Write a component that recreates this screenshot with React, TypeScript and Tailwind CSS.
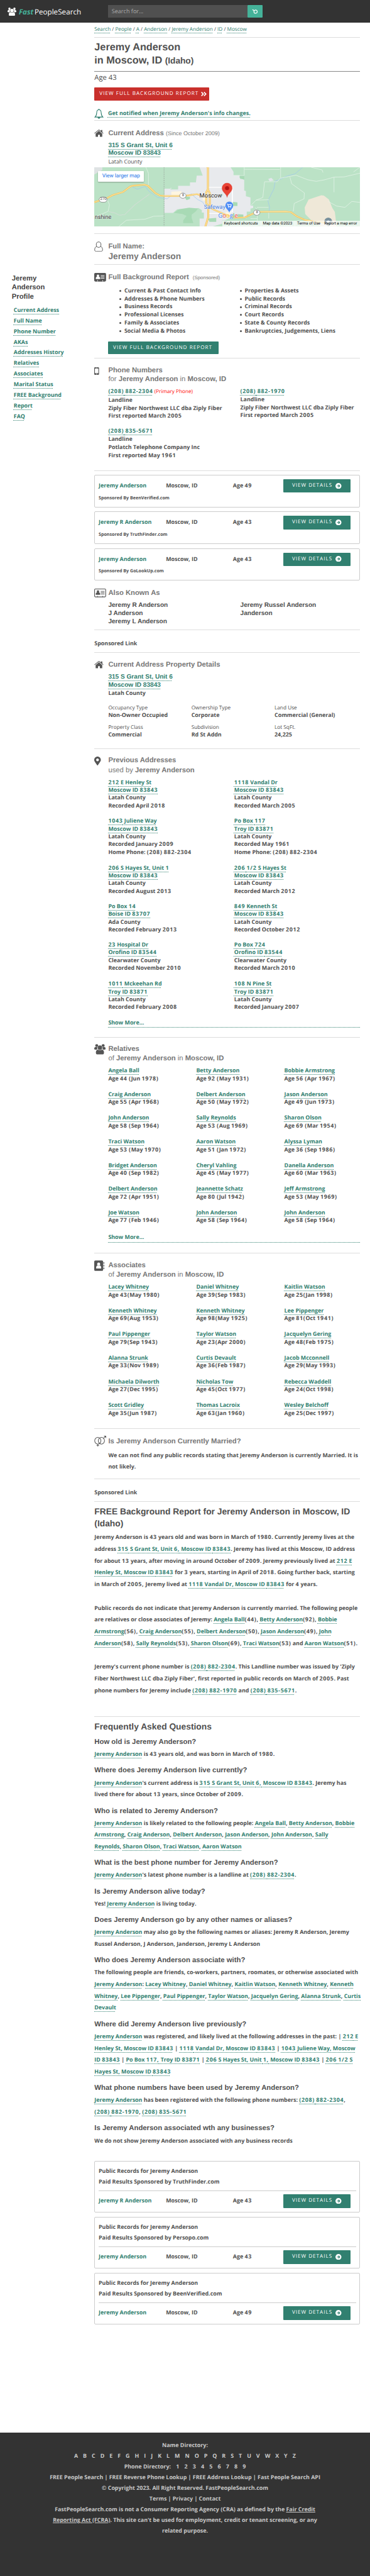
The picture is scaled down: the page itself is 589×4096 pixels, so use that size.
import type { ReactNode } from "react";
import { FaAngleDoubleRight, FaSearch, FaMapMarkerAlt } from "react-icons/fa";

const sans = "font-['Open_Sans','Noto_Sans',sans-serif]";
const arial = "font-['Liberation_Sans',Arial,sans-serif]";
const dotted =
  "text-[#318070] underline decoration-dotted decoration-1 underline-offset-[2.5px] [text-decoration-skip-ink:none]";

/* Figures and parentheses are set slightly wider than letters. */
function Txt({ children }: { children: ReactNode }) {
  if (typeof children !== "string") return <>{children}</>;
  return (
    <>
      {children.split(/((?:\d[\d(),/-]*|\(\d[\d)-]*|[()]))/).map((p, i) =>
        /^[\d()]/.test(p) ? (
          <span key={i} className="tracking-[0.700px]">{p}</span>
        ) : (
          p
        )
      )}
    </>
  );
}

function A({ children, plain }: { children: ReactNode; plain?: boolean }) {
  return <a className={dotted}>{plain ? children : <Txt>{children}</Txt>}</a>;
}

function Lines({ lines, className = "", plain }: { lines: ReactNode[]; className?: string; plain?: boolean }) {
  return (
    <div className={`whitespace-nowrap ${className}`}>
      {lines.map((l, i) => (
        <div key={i}>{plain ? l : <Txt>{l}</Txt>}</div>
      ))}
    </div>
  );
}

function Heading({ icon, children, className = "leading-[16px]" }: { icon?: ReactNode; children: ReactNode; className?: string }) {
  return (
    <div className="flex">
      <div className="flex h-4 w-[22.100px] shrink-0 items-center">{icon}</div>
      <h2 className={`${arial} whitespace-nowrap text-[11.270px] font-bold text-[#777] ${className}`}>{children}</h2>
    </div>
  );
}

function HouseIcon() {
  return (
    <svg viewBox="0 0 24 18" preserveAspectRatio="none" className="h-[11.500px] w-[15px]" fill="#555">
      <path d="M17 1h3.600v5.200l3 3-1 1.100L12 1.600 1.200 10.300l-1-1.200L11 .4h2l4 3.300z" />
      <path d="M12 3.200l8.400 6.900V18h-6v-5h-4.800v5h-6v-7.900z" />
    </svg>
  );
}

function BellIcon() {
  return (
    <svg viewBox="0 0 24 26" className="h-[16px] w-[15px]" fill="none" stroke="#318070" strokeWidth="1.8">
      <path d="M12 2.5c-4 0-5.6 3.400-5.800 7.500C6 15 5 18.500 1.800 21.400h20.400C19 18.500 18 15 17.800 10 17.600 5.900 16 2.500 12 2.500z" />
      <path d="M12 0v2.500" />
      <path d="M9 22h6c0 4-6 4-6 0z" fill="#318070" strokeWidth="1" />
    </svg>
  );
}

function PersonIcon() {
  return (
    <svg viewBox="0 0 22 26" className="h-[16.300px] w-[14px]" fill="none" stroke="#555" strokeWidth="1.500">
      <ellipse cx="11" cy="8" rx="6" ry="6.900" />
      <path d="M6.300 12.400C2.500 13.500 1 17 1 21c0 2.600 1.400 4.100 4 4.100h12c2.600 0 4-1.500 4-4.100 0-4-1.500-7.500-5.300-8.600" />
    </svg>
  );
}

function CardIcon({ solid }: { solid?: boolean }) {
  const fg = solid ? "#fff" : "#555";
  return (
    <svg viewBox="0 0 30 23" preserveAspectRatio="none" className="h-[14px] w-[18.800px]">
      <rect x="0.900" y="0.900" width="28.200" height="20.600" rx="2" fill={solid ? "#555" : "#fff"} stroke="#555" strokeWidth="1.800" />
      <ellipse cx="9.500" cy="7.200" rx="3" ry="3.200" fill={fg} />
      <path d="M4 16v-2.500c0-2 1.500-3.300 3-3.500h5c1.500.2 3 1.500 3 3.500V16z" fill={fg} />
      <path d="M16.500 7H26M16.500 10.500H26M16.500 14H26" stroke={fg} strokeWidth="1.500" />
      <path d="M8.500 19v3M21.500 19v3" stroke={fg} strokeWidth="1.500" />
    </svg>
  );
}

function PhoneIcon() {
  return (
    <svg viewBox="0 0 12 19" className="h-[12px] w-[7.600px]">
      <rect width="12" height="19" rx="2" fill="#555" />
      <rect x="1.700" y="3.300" width="8.600" height="11.500" fill="#fff" />
      <rect x="4.200" y="1.300" width="3.600" height="0.800" fill="#fff" />
      <circle cx="6" cy="16.900" r="1.100" fill="#fff" />
    </svg>
  );
}

function PeopleIcon({ className }: { className: string }) {
  return (
    <svg viewBox="0 0 29 26" preserveAspectRatio="none" className={className} fill="currentColor">
      <circle cx="6.300" cy="3.900" r="3.700" />
      <circle cx="22.700" cy="3.900" r="3.700" />
      <path d="M3.400 7.500C1 8 0 9.500 0 11.500c0 2 .8 2.800 3 2.800h4C8 13 7.500 9.500 8.300 8.200zM25.600 7.500C28 8 29 9.500 29 11.500c0 2-.8 2.800-3 2.800h-4c-1-1.300-.5-4.800-1.300-6.100z" />
      <circle cx="14.500" cy="9.300" r="5.600" />
      <path d="M9.300 14.200C5.500 15 4.200 17.500 4.200 21.500c0 3 1.600 4.500 4 4.500h12.600c2.400 0 4-1.500 4-4.500 0-4-1.300-6.500-5.100-7.300-2.800 2.300-7.600 2.300-10.400 0z" />
    </svg>
  );
}

function BookIcon() {
  return (
    <svg viewBox="0 0 26 27" className="h-[17px] w-[16px]">
      <rect width="23" height="27" rx="3" fill="#555" />
      <path d="M24 4.500h2v4h-2zM24 11.500h2v4h-2zM24 18.500h2v4h-2z" fill="#555" />
      <ellipse cx="11.500" cy="9.500" rx="3.900" ry="4.300" fill="#fff" />
      <path d="M5 21v-2.500c0-3 1.800-4.900 3.600-5.300 1.700 1.400 4.100 1.400 5.800 0 1.800.4 3.600 2.300 3.600 5.300V21z" fill="#fff" />
    </svg>
  );
}

function RingsIcon() {
  return (
    <svg viewBox="0 0 30 27" className="h-[17px] w-[19px]" fill="none" stroke="#555" strokeWidth="1.600">
      <ellipse cx="9" cy="12.500" rx="7.900" ry="8.500" />
      <ellipse cx="18" cy="12.500" rx="7.900" ry="8.500" />
      <path d="M9 21v6M5.800 24.300h6.400M23.500 6L29 1M24.500.8H29.200V5.500" />
    </svg>
  );
}

function ArrowCircle() {
  return (
    <svg viewBox="0 0 16 16" className="size-[9.500px]">
      <circle cx="8" cy="8" r="8" fill="#fff" />
      <path d="M4 8h7M8 4.600L11.400 8 8 11.400" stroke="#318070" strokeWidth="2" fill="none" />
    </svg>
  );
}

function DetailRow({ name, age, className }: { name: string; age: number; className: string }) {
  return (
    <div className={`flex ${className}`}>
      <div className="w-[107.200px] pt-[4px] text-[#318070]">{name}</div>
      <div className="w-[106.700px] pt-[4px]">Moscow, ID</div>
      <div className="w-[80px] pt-[4px]"><Txt>{`Age ${age}`}</Txt></div>
      <div className="flex h-[21.400px] w-[106.800px] items-center justify-center gap-[5px] rounded-[1px] bg-[#318070] pb-px text-[8.140px] font-normal tracking-[1px] text-white">
        <span>VIEW DETAILS</span>
        <ArrowCircle />
      </div>
    </div>
  );
}

const route8 = "M412 233H523L560 228 606 219 622 226 650 240M413 233L388 230 362 212 316 155 296 147 230 155 214 160 170 203 110 226 75 250 0 281";
const route8b = "M665 12L671 15V182L661 205V287L676 318 707 338 775 376 830 400 890 396 960 354 1130 352 1160 356 1195 388 1240 414 1300 428 1390 440";
const route95 = "M671 185L682 212V300L673 330V395L656 465";

function MapPanel() {
  return (
    <div className="relative mt-[2.400px] h-[94px] w-[423px] overflow-hidden bg-[#bbe2c6] font-['Roboto',sans-serif] font-normal">
      <svg viewBox="0 15 1568 450" preserveAspectRatio="none" className="h-full w-full">
        <path d="M0 15H48V35L0 70z" fill="#dfe3e4" />
        <path
          d="M622 15L632 50 640 78H605L600 130H565V156H495V184H450V172H455V178H414V362H465L490 335H580L615 325 635 340V360H647V405H622V465H700L755 445V420H770L800 400H900V352H922V330L938 325V307H922V245L895 235V196L885 192V108L860 104V76H822V50L805 15z"
          fill="#e8eaed"
        />
        <path d="M470 362L500 335 560 322 612 328 600 350 575 375V400L585 440H525V420L545 385 520 370z" fill="#a8dab5" />
        <path d="M815 278L845 282V310H815zM845 372L880 375V395L845 400zM858 76H885V110L858 95zM530 236L565 240V255L545 265zM745 218H757V232H745zM672 405L720 400V430H680z" fill="#a8dab5" />
        <path d="M455 200L515 197V226H455zM640 245H665V268H640zM775 355H805V380H775z" fill="#fef6e0" />
        <path d="M1340 228L1265 260 1242 320 1245 370 1290 430 1340 465H1430L1420 355 1405 325 1385 260 1355 230z" fill="#efe8d8" />
        <path d="M1027 103L1045 95 1060 115 1035 122z" fill="#e1e6ea" />
        <g fill="none" stroke="#9ec7f0" strokeWidth="3">
          <path d="M1230 15L1185 65 1140 80 1100 105 1068 120 1060 180 1025 270 1035 320 1030 365" />
          <path d="M225 165L255 182 300 160 325 200 375 245 430 255 450 235M570 215L610 260 640 280 660 320" />
        </g>
        <g fill="none" stroke="#e9f5ec" strokeWidth="3">
          <path d="M305 15L320 60V152M75 255L90 300 82 350 30 380 0 390M145 465L190 418 300 410 350 388 410 385" />
          <path d="M885 15V78H822M885 30L1095 32M1100 15V95L1080 125H1005L995 245 955 265 925 305M1100 98L1190 75 1260 110 1310 122 1360 110 1415 90 1475 88 1568 60M1155 90L1165 140 1240 210 1238 255 1180 290 1175 350M1280 15L1345 35 1350 55M1568 15L1530 50M1415 90V205M1568 282L1520 275 1480 320 1430 310 1380 275" />
          <path d="M955 265L1030 262M960 320H1028M970 350L950 320M1030 360V405M962 360V422M922 405H960" />
        </g>
        <path d="M85 352L120 362 150 380 180 375 240 300 325 220" fill="none" stroke="#d3ddd6" strokeWidth="4" />
        <path d="M672 168H815V355H790M672 366H740" fill="none" stroke="#fff" strokeWidth="6" />
        <path d="M412 15V465" stroke="#888" strokeWidth="2.500" strokeDasharray="9 7" />
        <g fill="none" stroke="#f5bd4d" strokeWidth="11">
          <path d={route8} />
          <path d={route8b} />
          <path d={route95} />
        </g>
        <g fill="none" stroke="#fde7a5" strokeWidth="5">
          <path d={route8} />
          <path d={route8b} />
          <path d={route95} />
        </g>
        <g fill="#fff" stroke="#777" strokeWidth="3">
          <rect x="29" y="241" width="47" height="40" rx="18" ry="20" />
          <ellipse cx="523" cy="231" rx="19" ry="20" />
          <ellipse cx="959" cy="360" rx="19" ry="20" />
        </g>
        <path d="M784 245C781 215 754 205 754 173a30 38 0 0 1 60 0C814 205 787 215 784 245z" fill="#ea4335" stroke="#c5322a" strokeWidth="1.500" />
        <ellipse cx="784" cy="174" rx="12" ry="15" fill="#b31412" />
        <path d="M797 363C794 338 774 332 774 306a23 30 0 0 1 46 0C820 332 800 338 797 363z" fill="#4f8df5" />
        <path d="M783 296H788L792 314H806L809 300H790" fill="none" stroke="#fff" strokeWidth="4" />
        <circle cx="793" cy="321" r="3" fill="#fff" />
        <circle cx="805" cy="321" r="3" fill="#fff" />
        <path d="M1381 465L1362 445a23 30 0 1 1 38 0z" fill="#78909c" />
        <ellipse cx="1381" cy="430" rx="8" ry="10" fill="#fff" />
      </svg>
      <span className="absolute left-[9.300px] top-[47.500px] text-[6px] leading-[8px] text-[#555]">270</span>
      <span className="absolute left-[139.400px] top-[41.200px] text-[6px] leading-[8px] text-[#555]">8</span>
      <span className="absolute left-[257.100px] top-[68px] text-[6px] leading-[8px] text-[#555]">8</span>
      <span className="absolute left-[167.300px] top-[41px] text-[9.400px] leading-[10px] text-[#222] [text-shadow:0_0_1px_#fff,0_0_2px_#fff]">Moscow</span>
      <span className="absolute left-[174.500px] top-[59px] text-[9px] leading-[10px] text-[#3a78e0] [text-shadow:0_0_1px_#fff,0_0_2px_#fff]">Safeway</span>
      <span className="absolute left-[0.500px] top-[75px] text-[9px] leading-[10px] text-[#333] [text-shadow:0_0_1px_#fff,0_0_2px_#fff]">nshine</span>
      <span className={`absolute left-[197px] top-[71px] text-[9.500px] font-medium leading-[12px] [text-shadow:0_0_1px_#fff,0_0_1px_#fff] ${sans}`}>
        <span className="text-[#4285f4]">G</span>
        <span className="text-[#ea4335]">o</span>
        <span className="text-[#fbbc05]">o</span>
        <span className="text-[#4285f4]">g</span>
        <span className="text-[#34a853]">l</span>
        <span className="text-[#ea4335]">e</span>
      </span>
      <div className="absolute left-[6.200px] top-[6.200px] h-[16.400px] w-[72.500px] rounded-[1px] bg-white text-center text-[8.400px] leading-[16.400px] text-[#1a73e8] shadow-[0_1px_2px_rgba(0,0,0,0.3)]">
        View larger map
      </div>
      <div className="absolute bottom-0 right-0 flex h-[8.800px] bg-white/70 text-[6.240px] leading-[9.500px] text-black">
        <span className="w-[61.500px] whitespace-nowrap pl-[3px]">Keyboard shortcuts</span>
        <span className="w-[54px] whitespace-nowrap border-l border-white/60 pl-[2.500px]">Map data ©2023</span>
        <span className="w-[45.300px] whitespace-nowrap border-l border-white/60 pl-[3px]">Terms of Use</span>
        <span className="w-[59px] whitespace-nowrap pl-[2px]">Report a map error</span>
      </div>
    </div>
  );
}

const profileLinks = [
  "Current Address", "Full Name", "Phone Number", "AKAs", "Addresses History", "Relatives",
  "Associates", "Marital Status", "FREE Background", "Report", "FAQ",
];

type Address = { street: string; city: string; rest: string[] };
const addresses: { h: string; pair: [Address, Address] }[] = [
  { h: "h-[61.500px]", pair: [
    { street: "212 E Henley St", city: "Moscow ID 83843", rest: ["Latah County", "Recorded April 2018"] },
    { street: "1118 Vandal Dr", city: "Moscow ID 83843", rest: ["Latah County", "Recorded March 2005"] } ] },
  { h: "h-[74.500px]", pair: [
    { street: "1043 Juliene Way", city: "Moscow ID 83843", rest: ["Latah County", "Recorded January 2009", "Home Phone: (208) 882-2304"] },
    { street: "Po Box 117", city: "Troy ID 83871", rest: ["Latah County", "Recorded May 1961", "Home Phone: (208) 882-2304"] } ] },
  { h: "h-[61.200px]", pair: [
    { street: "206 S Hayes St, Unit 1", city: "Moscow ID 83843", rest: ["Latah County", "Recorded August 2013"] },
    { street: "206 1/2 S Hayes St", city: "Moscow ID 83843", rest: ["Latah County", "Recorded March 2012"] } ] },
  { h: "h-[61.200px]", pair: [
    { street: "Po Box 14", city: "Boise ID 83707", rest: ["Ada County", "Recorded February 2013"] },
    { street: "849 Kenneth St", city: "Moscow ID 83843", rest: ["Latah County", "Recorded October 2012"] } ] },
  { h: "h-[62.200px]", pair: [
    { street: "23 Hospital Dr", city: "Orofino ID 83544", rest: ["Clearwater County", "Recorded November 2010"] },
    { street: "Po Box 724", city: "Orofino ID 83544", rest: ["Clearwater County", "Recorded March 2010"] } ] },
  { h: "h-[62px]", pair: [
    { street: "1011 Mckeehan Rd", city: "Troy ID 83871", rest: ["Latah County", "Recorded February 2008"] },
    { street: "108 N Pine St", city: "Troy ID 83871", rest: ["Latah County", "Recorded January 2007"] } ] },
];

const relatives: [string, string][] = [
  ["Angela Ball", "Age 44 (Jun 1978)"], ["Betty Anderson", "Age 92 (May 1931)"], ["Bobbie Armstrong", "Age 56 (Apr 1967)"],
  ["Craig Anderson", "Age 55 (Apr 1968)"], ["Delbert Anderson", "Age 50 (May 1972)"], ["Jason Anderson", "Age 49 (Jun 1973)"],
  ["John Anderson", "Age 58 (Sep 1964)"], ["Sally Reynolds", "Age 53 (Aug 1969)"], ["Sharon Olson", "Age 69 (Mar 1954)"],
  ["Traci Watson", "Age 53 (May 1970)"], ["Aaron Watson", "Age 51 (Jan 1972)"], ["Alyssa Lyman", "Age 36 (Sep 1986)"],
  ["Bridget Anderson", "Age 40 (Sep 1982)"], ["Cheryl Vahling", "Age 45 (May 1977)"], ["Danella Anderson", "Age 60 (Mar 1963)"],
  ["Delbert Anderson", "Age 72 (Apr 1951)"], ["Jeannette Schatz", "Age 80 (Jul 1942)"], ["Jeff Armstrong", "Age 53 (May 1969)"],
  ["Joe Watson", "Age 77 (Feb 1946)"], ["John Anderson", "Age 58 (Sep 1964)"], ["John Anderson", "Age 58 (Sep 1964)"],
];

const associates: [string, string][] = [
  ["Lacey Whitney", "Age 43(May 1980)"], ["Daniel Whitney", "Age 39(Sep 1983)"], ["Kaitlin Watson", "Age 25(Jan 1998)"],
  ["Kenneth Whitney", "Age 69(Aug 1953)"], ["Kenneth Whitney", "Age 98(May 1925)"], ["Lee Pippenger", "Age 81(Oct 1941)"],
  ["Paul Pippenger", "Age 79(Sep 1943)"], ["Taylor Watson", "Age 23(Apr 2000)"], ["Jacquelyn Gering", "Age 48(Feb 1975)"],
  ["Alanna Strunk", "Age 33(Nov 1989)"], ["Curtis Devault", "Age 36(Feb 1987)"], ["Jacob Mcconnell", "Age 29(May 1993)"],
  ["Michaela Dilworth", "Age 27(Dec 1995)"], ["Nicholas Tow", "Age 45(Oct 1977)"], ["Rebecca Waddell", "Age 24(Oct 1998)"],
  ["Scott Gridley", "Age 35(Jun 1987)"], ["Thomas Lacroix", "Age 63(Jan 1960)"], ["Wesley Belchoff", "Age 25(Dec 1997)"],
];

function People({ list, className }: { list: [string, string][]; className: string }) {
  return (
    <div className={`ml-[22.100px] grid grid-cols-[140px_140.200px_120px] ${className}`}>
      {list.map(([n, a], i) => (
        <Lines key={i} className="h-[37.640px] leading-[12.500px]" lines={[<A>{n}</A>, a]} />
      ))}
    </div>
  );
}

const checks = [
  ["Current & Past Contact Info", "Addresses & Phone Numbers", "Business Records", "Professional Licenses", "Family & Associates", "Social Media & Photos"],
  ["Properties & Assets", "Public Records", "Criminal Records", "Court Records", "State & County Records", "Bankruptcies, Judgements, Liens"],
];

const property = [
  ["Occupancy Type", "Non-Owner Occupied"], ["Ownership Type", "Corporate"], ["Land Use", "Commercial (General)"],
  ["Property Class", "Commercial"], ["Subdivision", "Rd St Addn"], ["Lot SqFt.", "24,225"],
];

/* Text between square brackets is rendered as a dotted link. */
function Rich({ text }: { text: string }) {
  return (
    <div>
      {text === "" ? "\u00a0" : text.split(/(\[[^\]]+\])/).map((part, i) =>
        part.startsWith("[") ? <A key={i}>{part.slice(1, -1)}</A> : <Txt key={i}>{part}</Txt>
      )}
    </div>
  );
}

const report = [
  "Jeremy Anderson is 43 years old and was born in March of 1980. Currently Jeremy lives at the",
  "address [315 S Grant St, Unit 6, Moscow ID 83843]. Jeremy has lived at this Moscow, ID address",
  "for about 13 years, after moving in around October of 2009. Jeremy previously lived at [212 E]",
  "[Henley St, Moscow ID 83843] for 3 years, starting in April of 2018. Going further back, starting",
  "in March of 2005, Jeremy lived at [1118 Vandal Dr, Moscow ID 83843] for 4 years.",
  "",
  "Public records do not indicate that Jeremy Anderson is currently married. The following people",
  "are relatives or close associates of Jeremy: [Angela Ball](44), [Betty Anderson](92), [Bobbie]",
  "[Armstrong](56), [Craig Anderson](55), [Delbert Anderson](50), [Jason Anderson](49), [John]",
  "[Anderson](58), [Sally Reynolds](53), [Sharon Olson](69), [Traci Watson](53) and [Aaron Watson](51).",
  "",
  "Jeremy's current phone number is [(208) 882-2304]. This Landline number was issued by 'Ziply",
  "Fiber Northwest LLC dba Ziply Fiber', first reported in public records on March of 2005. Past",
  "phone numbers for Jeremy include [(208) 882-1970] and [(208) 835-5671].",
];

const faq: [string, string[]][] = [
  ["How old is Jeremy Anderson?", ["[Jeremy Anderson] is 43 years old, and was born in March of 1980."]],
  ["Where does Jeremy Anderson live currently?", [
    "[Jeremy Anderson]'s current address is [315 S Grant St, Unit 6, Moscow ID 83843]. Jeremy has",
    "lived there for about 13 years, since October of 2009."]],
  ["Who is related to Jeremy Anderson?", [
    "[Jeremy Anderson] is likely related to the following people: [Angela Ball], [Betty Anderson], [Bobbie]",
    "[Armstrong], [Craig Anderson], [Delbert Anderson], [Jason Anderson], [John Anderson], [Sally]",
    "[Reynolds], [Sharon Olson], [Traci Watson], [Aaron Watson]"]],
  ["What is the best phone number for Jeremy Anderson?", ["[Jeremy Anderson]'s latest phone number is a landline at [(208) 882-2304]."]],
  ["Is Jeremy Anderson alive today?", ["Yes! [Jeremy Anderson] is living today."]],
  ["Does Jeremy Anderson go by any other names or aliases?", [
    "[Jeremy Anderson] may also go by the following names or aliases: Jeremy R Anderson, Jeremy",
    "Russel Anderson, J Anderson, Janderson, Jeremy L Anderson"]],
  ["Who does Jeremy Anderson associate with?", [
    "The following people are friends, co-workers, partners, roomates, or otherwise associated with",
    "[Jeremy Anderson]: [Lacey Whitney], [Daniel Whitney], [Kaitlin Watson], [Kenneth Whitney], [Kenneth]",
    "[Whitney], [Lee Pippenger], [Paul Pippenger], [Taylor Watson], [Jacquelyn Gering], [Alanna Strunk], [Curtis]",
    "[Devault]"]],
  ["Where did Jeremy Anderson live previously?", [
    "[Jeremy Anderson] was registered, and likely lived at the following addresses in the past: | [212 E]",
    "[Henley St, Moscow ID 83843] | [1118 Vandal Dr, Moscow ID 83843] | [1043 Juliene Way, Moscow]",
    "[ID 83843] | [Po Box 117, Troy ID 83871] | [206 S Hayes St, Unit 1, Moscow ID 83843] | [206 1/2 S]",
    "[Hayes St, Moscow ID 83843]"]],
  ["What phone numbers have been used by Jeremy Anderson?", [
    "[Jeremy Anderson] has been registered with the following phone numbers: [(208) 882-2304],",
    "[(208) 882-1970], [(208) 835-5671]"]],
  ["Is Jeremy Anderson associated wth any businesses?", ["We do not show Jeremy Anderson associated with any business records"]],
];

const section = "border-t border-[#ddd]";

export default function App() {
  return (
    <div className={`flex h-[4096px] w-[589px] flex-col bg-white text-[8.900px] font-bold text-[#505050] [text-rendering:geometricPrecision] ${sans}`}>
      <header className="flex h-9 items-start bg-[#333] font-normal text-white">
        <div className="flex w-[171.700px] items-center pl-[12.400px] pt-[8.500px]">
          <PeopleIcon className="h-[13.500px] w-[14px]" />
          <span className="ml-[3.500px] whitespace-nowrap text-[11.700px] leading-[20px]">
            <span className="font-bold italic text-[#45b299]">Fast</span>
            <span className="ml-[1.500px]">PeopleSearch</span>
          </span>
        </div>
        <div className="mt-2 flex h-[19.500px] w-[246px]">
          <div className="w-[222px] bg-[#505050] pl-[6px] text-[9.100px] leading-[20px] text-[#aaa]">Search for...</div>
          <div className="flex w-[24px] items-center justify-center rounded-[1px] bg-[#45b299]">
            <FaSearch className="size-[8px] -scale-x-100 rotate-[80deg] [transform:none]" />
          </div>
        </div>
      </header>

      <div className="flex">
        <aside className="w-[150.300px] shrink-0 pl-[18.800px] pt-[399.600px]">
          <Lines className={`${arial} text-[11.270px] leading-[14.500px] text-[#444]`} lines={["Jeremy", "Anderson", "Profile"]} />
          <Lines className="mt-[5.700px] pl-[3px] leading-[16.900px]" lines={profileLinks.map((l) => <A>{l}</A>)} />
        </aside>

        <main className="w-[423px]">
          <nav className="h-[23px] whitespace-nowrap pt-[2px] text-[8.180px] font-normal leading-[18px]">
            <A>Search</A> / <A>People</A> / <A>A</A> / <A>Anderson</A> / <A>Jeremy Anderson</A> / <A>ID</A> / <A>Moscow</A>
          </nav>

          <section className={`${section} h-[54px] pt-[5px]`}>
            <h1 className={`${arial} text-[16.280px] leading-[21.100px]`}>
              Jeremy Anderson
              <br />
              in Moscow, ID <span className="text-[13.700px]">(Idaho)</span>
            </h1>
          </section>

          <section className="h-[78px] border-t border-[#888] pt-[2px] font-normal">
            <div className="text-[11.270px] leading-[16px]">Age 43</div>
            <div className="mt-[7px] flex h-[20.500px] w-[183px] items-center rounded-[1px] bg-[#c9302c] pl-[8px] text-[8.140px] tracking-[1.040px] text-white">
              <span className="whitespace-nowrap">VIEW FULL BACKGROUND REPORT</span>
              <FaAngleDoubleRight className="ml-[3px] size-[11px]" />
            </div>
            <div className="mt-[13px] flex h-4 items-center">
              <div className="w-[21.700px]"><BellIcon /></div>
              <div className="pb-[3px] text-[8.930px] font-bold leading-[13px]"><A>Get notified when Jeremy Anderson's info changes.</A></div>
            </div>
          </section>

          <section className={`${section} h-[180px] pt-[11.800px]`}>
            <Heading icon={<HouseIcon />}>
              Current Address <span className="text-[9.020px] font-normal">(Since October 2009)</span>
            </Heading>
            <div className="ml-[22.100px] mt-[6px]">
              <Lines className={`${arial} text-[10.080px] leading-[12.600px]`} lines={[<A plain>315 S Grant St, Unit 6</A>, <A plain>Moscow ID 83843</A>]} />
              <div className="text-[8.760px] font-normal leading-[12.600px]">Latah County</div>
            </div>
            <MapPanel />
          </section>

          <section className={`${section} h-[49px] pt-[11.800px]`}>
            <Heading icon={<PersonIcon />}>
              Full Name:
              <div className="text-[13.770px]">Jeremy Anderson</div>
            </Heading>
          </section>

          <section className={`${section} h-[149px] pt-[11.800px]`}>
            <Heading icon={<CardIcon solid />}>
              Full Background Report <span className="ml-[3px] text-[7.900px] font-normal">(Sponsored)</span>
            </Heading>
            <div className="ml-[40px] mt-[6.100px] flex">
              {checks.map((c, i) => (
                <ul key={i} className="w-[210.200px] leading-[12.740px]">
                  {c.map((t) => (
                    <li key={t} className="flex items-center whitespace-nowrap">
                      <span className="mr-[4.700px] mt-[1px] size-[3px] rounded-full bg-[#505050]" />
                      {t}
                    </li>
                  ))}
                </ul>
              ))}
            </div>
            <div className="ml-[21.800px] mt-[10.400px] flex h-[20.400px] w-[175.500px] items-center whitespace-nowrap rounded-[1px] bg-[#318070] pl-[8px] text-[8.140px] font-normal tracking-[1.040px] text-white">
              VIEW FULL BACKGROUND REPORT
            </div>
          </section>

          <section className={`${section} h-[179px] pt-[11.800px]`}>
            <Heading icon={<PhoneIcon />} className="leading-[14.400px]">
              Phone Numbers
              <br />
              <span className="font-normal">for</span> Jeremy Anderson <span className="font-normal">in</span> Moscow, ID
            </Heading>
            <div className="ml-[22.100px] mt-[5.500px] grid grid-cols-[210.200px_190px] leading-[12.700px]">
              <Lines className="h-[63.300px]" lines={[
                <><A>(208) 882-2304</A> <span className="text-[8.170px] font-normal text-[#f00]">(Primary Phone)</span></>,
                "Landline", "Ziply Fiber Northwest LLC dba Ziply Fiber", "First reported March 2005"]} />
              <Lines lines={[<A>(208) 882-1970</A>, "Landline", "Ziply Fiber Northwest LLC dba Ziply Fiber", "First reported March 2005"]} />
              <Lines lines={[<A>(208) 835-5671</A>, "Landline", "Potlatch Telephone Company Inc", "First reported May 1961"]} />
            </div>
          </section>

          <section className={`${section} flex h-[182px] flex-col gap-[6.450px] pt-[6.200px]`}>
            {([["Jeremy Anderson", 49, "BeenVerified.com"], ["Jeremy R Anderson", 43, "TruthFinder.com"], ["Jeremy Anderson", 43, "GoLookUp.com"]] as [string, number, string][]).map(([n, a, s]) => (
              <div key={s} className="h-[51.800px] rounded-[2px] border border-[#ccc] px-[5.700px] pt-[5.900px]">
                <DetailRow name={n} age={a} className="leading-[12.300px]" />
                <div className="mt-[2.300px] text-[7.140px] leading-[12px]">Sponsored By {s}</div>
              </div>
            ))}
          </section>

          <section className="h-[71px] pt-[4.900px]">
            <Heading icon={<CardIcon />}>Also Known As</Heading>
            <div className={`${arial} ml-[22.100px] mt-[4.800px] flex text-[10.080px] leading-[13.050px]`}>
              <Lines className="w-[210.200px]" lines={["Jeremy R Anderson", "J Anderson", "Jeremy L Anderson"]} />
              <Lines lines={["Jeremy Russel Anderson", "Janderson"]} />
            </div>
          </section>

          <section className={`${section} h-[36px] pt-[13px] leading-[16px]`}>Sponsored Link</section>

          <section className={`${section} h-[153px] pt-[11.200px]`}>
            <Heading icon={<HouseIcon />}>Current Address Property Details</Heading>
            <div className="ml-[22.100px] mt-[5px]">
              <Lines className={`${arial} text-[10.080px] leading-[13px]`} lines={[<A plain>315 S Grant St, Unit 6</A>, <A plain>Moscow ID 83843</A>]} />
              <div className="leading-[12.600px]">Latah County</div>
              <div className="mt-[11.500px] grid grid-cols-[132.300px_132.300px_130px] leading-[11px]">
                {property.map(([k, v]) => (
                  <div key={k} className="h-[31.200px] whitespace-nowrap">
                    <div className="text-[8.250px] font-normal">{k}</div>
                    <div>{v}</div>
                  </div>
                ))}
              </div>
            </div>
          </section>

          <section className={`${section} h-[459px] pt-[11.300px]`}>
            <Heading icon={<FaMapMarkerAlt className="h-[14px] w-[10.500px] text-[#555]" />} className="leading-[15.200px]">
              Previous Addresses
              <br />
              <span className="font-normal">used by</span> Jeremy Anderson
            </Heading>
            <div className="ml-[22.100px] mt-[5px]">
              {addresses.map(({ h, pair }, r) => (
                <div key={r} className={`${h} flex leading-[12.350px]`}>
                  {pair.map((a) => (
                    <Lines key={a.street} className="w-[210.200px]" lines={[<A>{a.street}</A>, <A>{a.city}</A>, ...a.rest]} />
                  ))}
                </div>
              ))}
              <div className="h-[13.500px] border-b border-dotted border-[#318070] leading-[12.500px] text-[#318070]">Show More...</div>
            </div>
          </section>

          <section className={`${section} h-[343px] pt-[10.700px]`}>
            <Heading icon={<PeopleIcon className="h-[16.500px] w-[18.200px] text-[#555]" />} className="leading-[15.200px]">
              Relatives
              <br />
              <span className="font-normal">of</span> Jeremy Anderson <span className="font-normal">in</span> Moscow, ID
            </Heading>
            <People list={relatives} className="mt-[5.100px]" />
            <div className="ml-[22.100px] mt-[1.900px] h-[15px] border-b border-dotted border-[#318070] leading-[12.500px] text-[#318070]">Show More...</div>
          </section>

          <section className={`${section} h-[279px] pt-[11.700px]`}>
            <Heading icon={<BookIcon />} className="leading-[15.200px]">
              Associates
              <br />
              <span className="font-normal">of</span> Jeremy Anderson <span className="font-normal">in</span> Moscow, ID
            </Heading>
            <People list={associates} className="mt-[5px]" />
          </section>

          <section className={`${section} h-[80px] pt-[11.500px]`}>
            <Heading icon={<RingsIcon />}>Is Jeremy Anderson Currently Married?</Heading>
            <Lines className="ml-[22.100px] mt-[5.100px] leading-[18px]" lines={["We can not find any public records stating that Jeremy Anderson is currently Married. It is", "not likely."]} />
          </section>

          <section className={`${section} h-[36px] pt-[13px] leading-[16px]`}>Sponsored Link</section>

          <section className={`${section} h-[342px] pt-[5.850px]`}>
            <h2 className={`${arial} whitespace-nowrap text-[13.810px] leading-[18.700px]`}>
              FREE Background Report for Jeremy Anderson in Moscow, ID
              <br />
              (Idaho)
            </h2>
            <div className="mt-[3.850px] whitespace-nowrap leading-[18.750px]">
              {report.map((l, i) => <Rich key={i} text={l} />)}
            </div>
          </section>

          <section className={`${section} h-[707px] pt-[5.900px]`}>
            <h2 className={`${arial} h-[17.700px] text-[13.810px] leading-[18.700px]`}>Frequently Asked Questions</h2>
            {faq.map(([q, a]) => (
              <div key={q} className="whitespace-nowrap pt-[7.500px] leading-[18.750px]">
                <h3 className={`${arial} mb-[0.350px] text-[11.340px]`}>{q}</h3>
                {a.map((l, i) => <Rich key={i} text={l} />)}
              </div>
            ))}
          </section>

          <section className="flex h-[431.500px] flex-col gap-[6.650px]">
            {([["Jeremy R Anderson", 43, "TruthFinder.com"], ["Jeremy Anderson", 43, "Persopo.com"], ["Jeremy Anderson", 49, "BeenVerified.com"]] as [string, number, string][]).map(([n, a, s]) => (
              <div key={s} className="h-[82.300px] rounded-[2px] border border-[#ccc] px-[5.700px] pt-[5.850px]">
                <Lines className="leading-[17.300px]" lines={["Public Records for Jeremy Anderson", `Paid Results Sponsored by ${s}`]} />
                <DetailRow name={n} age={a} className="mt-[5.200px] border-t border-[#ccc] pt-[5.700px] leading-[12.300px]" />
              </div>
            ))}
          </section>
        </main>
      </div>

      <footer className="flex grow flex-col items-center whitespace-nowrap bg-[#333] pt-[12.700px] text-center text-[8.900px] leading-[16.930px] text-[#c8c8c8]">
        <div>Name Directory:</div>
        <div className="flex w-[353px] justify-between">
          {"ABCDEFGHIJKLMNOPQRSTUVWXYZ".split("").map((c) => <a key={c}>{c}</a>)}
        </div>
        <div className="flex gap-[8.200px]">
          <span>Phone Directory:</span>
          {"123456789".split("").map((c) => <a key={c}>{c}</a>)}
        </div>
        <div>FREE People Search | FREE Reverse Phone Lookup | FREE Address Lookup | Fast People Search API</div>
        <div>© Copyright 2023. All Right Reserved. FastPeopleSearch.com</div>
        <div>Terms | Privacy | Contact</div>
        <div>FastPeopleSearch.com is not a Consumer Reporting Agency (CRA) as defined by the <u>Fair Credit</u></div>
        <div><u>Reporting Act (FCRA)</u>. This site can't be used for employment, credit or tenant screening, or any</div>
        <div>related purpose.</div>
      </footer>
    </div>
  );
}
